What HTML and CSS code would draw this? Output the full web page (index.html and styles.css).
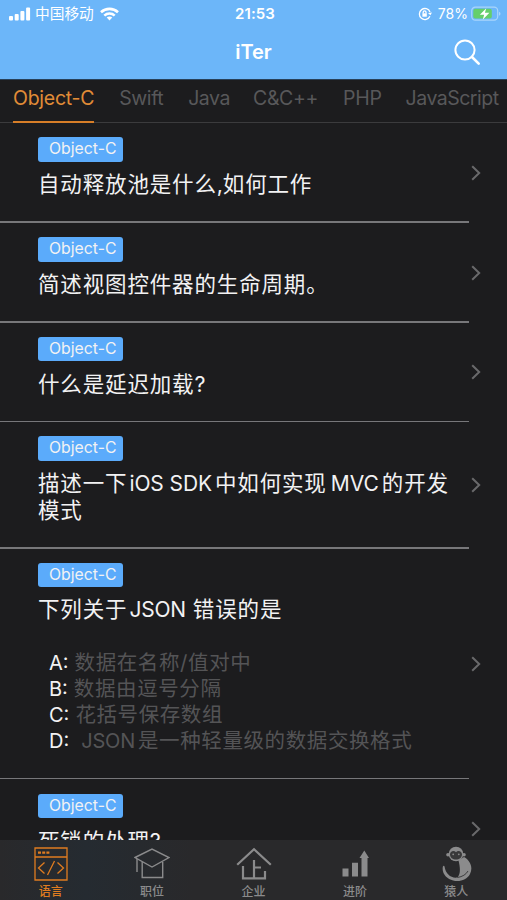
FILE: index.html
```html
<!DOCTYPE html>
<html lang="zh-CN">
<head>
<meta charset="utf-8">
<title>iTer</title>
<link rel="stylesheet" href="styles.css">
</head>
<body>
<svg width="0" height="0" class="defs"><symbol id="chevron" viewBox="0 0 10 16"><path d="M1.2 1.2 8.2 8l-7 6.8" fill="none" stroke="currentColor" stroke-width="2"/></symbol></svg>
<div class="app">
  <header class="header">
    <div class="status">
      <div class="status-left">
        <svg width="22" height="14" viewBox="0 0 22 14" fill="#fff"><rect x="0" y="9" width="4" height="4.5" rx="1"/><rect x="5.7" y="7" width="4" height="6.5" rx="1"/><rect x="11.4" y="4" width="4" height="9.5" rx="1"/><rect x="17.1" y="0.5" width="4" height="13" rx="1"/></svg>
        <span class="carrier">中国移动</span>
        <svg width="19" height="14" viewBox="0 0 19 14" fill="none" stroke="#fff" stroke-width="2.6"><path d="M1 5.2C5.8.7 13.2.7 18 5.2"/><path d="M4.3 8.6c3-2.8 7.4-2.8 10.4 0"/><path d="m9.5 13.5 2.8-3c-1.6-1.3-4-1.3-5.6 0Z" fill="#fff" stroke="none"/></svg>
      </div>
      <time class="clock">21:53</time>
      <div class="status-right">
        <svg class="lock" width="14" height="14" viewBox="0 0 14 14" fill="none" stroke="#fff" stroke-width="1.3"><path d="M11.9 9.3A5.5 5.5 0 1 1 12 5"/><path d="m10 6 2.4 2.2L14 5.5Z" fill="#fff" stroke="none"/><rect x="4.4" y="6.3" width="4.4" height="3.4" fill="#fff" stroke="none"/><path d="M5.2 6.5V5.3a1.4 1.4 0 0 1 2.8 0v1.2"/></svg>
        <span class="percent">78%</span>
        <svg width="30" height="16" viewBox="0 0 30 16"><rect x=".7" y="1.2" width="26" height="13" rx="3.6" fill="none" stroke="#a9d5fb" stroke-width="1.2"/><rect x="2.3" y="2.8" width="18.5" height="9.8" rx="2" fill="#65cf6b"/><path d="M28 5.7c2 .7 2 3.3 0 4Z" fill="#a9d5fb"/><path d="m15.3 2.2-6.5 6.6h4.4l-1.5 5 6.7-7h-4.5Z" fill="#fff"/></svg>
      </div>
    </div>
    <div class="nav">
      <h1>iTer</h1>
      <svg class="search" width="27" height="27" viewBox="0 0 27 27" fill="none" stroke="#fff"><circle cx="11" cy="11" r="9.6" stroke-width="2"/><path d="m18 18 6.7 6.7" stroke-width="2.6" stroke-linecap="round"/></svg>
    </div>
  </header>
  <nav class="tabs">
    <a class="tab active">Object-C</a><a class="tab">Swift</a><a class="tab">Java</a><a class="tab cpp">C&amp;C++</a><a class="tab php">PHP</a><a class="tab js">JavaScript</a>
  </nav>
  <main class="list">
    <article class="row"><div class="content"><span class="tag">Object-C</span><h2>自动释放池是什么<i class="comma">,</i>如何工作</h2></div><svg class="chev"><use href="#chevron"/></svg></article>
    <article class="row"><div class="content"><span class="tag">Object-C</span><h2>简述视图控件器的生命周期。</h2></div><svg class="chev"><use href="#chevron"/></svg></article>
    <article class="row"><div class="content"><span class="tag">Object-C</span><h2>什么是延迟加载<i>?</i></h2></div><svg class="chev"><use href="#chevron"/></svg></article>
    <article class="row"><div class="content"><span class="tag">Object-C</span><h2>描述一下<b>iOS SDK</b>中如何实现<b class="mvc">MVC</b>的开发<br>模式</h2></div><svg class="chev"><use href="#chevron"/></svg></article>
    <article class="row"><div class="content"><span class="tag">Object-C</span><h2>下列关于<b class="json-title">JSON</b> 错误的是</h2>
      <ul class="options">
        <li><b>A:</b><span>数据在名称/值对中</span></li>
        <li><b>B:</b><span>数据由逗号分隔</span></li>
        <li><b>C:</b><span>花括号保存数组</span></li>
        <li class="wide"><b>D:</b><span><i class="json">JSON</i>是一种轻量级的数据交换格式</span></li>
      </ul></div><svg class="chev"><use href="#chevron"/></svg></article>
    <article class="row"><div class="content"><span class="tag">Object-C</span><h2>死锁的处理<i>?</i></h2></div><svg class="chev"><use href="#chevron"/></svg></article>
  </main>
  <footer class="tabbar">
    <a class="item on"><svg width="36" height="36" viewBox="0 0 36 36" fill="none" stroke="currentColor" stroke-width="1.3"><path d="M2 2h32v32H2ZM2 11h32"/><path d="M5 6.7h11.5" stroke-width="2.2" stroke-dasharray="3 1.2"/><path d="m11.5 16.5-6 5.5 6 5.5M24.5 16.5l6 5.5-6 5.5M21.500 15l-7 14"/></svg><span>语言</span></a>
    <a class="item"><svg width="36" height="36" viewBox="0 0 36 36" fill="none" stroke="currentColor" stroke-width="1.4"><path d="M1 11.5 18 3l17 8.5L18 21Z"/><path d="M8.2 16v15.5h20.5V16M3 13v13"/></svg><span>职位</span></a>
    <a class="item"><svg width="36" height="36" viewBox="0 0 36 36" fill="none" stroke="currentColor" stroke-width="2.2"><path d="M1.2 18.7 18 3.2l16.8 15.5M7 20v12.3h22V25M18 14v18M18 21.5h7"/></svg><span>企业</span></a>
    <a class="item"><svg width="36" height="36" viewBox="0 0 36 36" fill="currentColor"><path d="M5.5 22.500h6v8h-6ZM15 16.700h6v13.800h-6ZM24.500 12h-2L27.300 4.500l4.700 7.500h-1.500v18.500h-6Z"/></svg><span>进阶</span></a>
    <a class="item"><svg width="36" height="36" viewBox="0 0 36 36"><path d="M26 11c7 4 9 11 6 17-5 10-22 9-26.500-1-1-2.500-1-5-.6-6.500.4-1.200 1.500-1 1.700.3C7.600 28 13 32.500 19.500 31.500c3.500-4 2.500-11 1-17Z" fill="currentColor"/><path d="M19.500 31.500c5-.8 8.500-3 10.500-6.500" fill="none" stroke="#29292b" stroke-width=".8"/><circle cx="18" cy="8" r="7.300" fill="currentColor"/><circle cx="10" cy="8.800" r="1.800" fill="currentColor"/><circle cx="26" cy="8.800" r="1.800" fill="currentColor"/><path d="M12 8.500c0-3.500 4-4.500 6-2.300 2-2.200 6-1.200 6 2.300 0 3-2.800 5-6 5s-6-2-6-5Z" fill="#39393a"/><circle cx="15.200" cy="8.300" r=".9" fill="currentColor"/><circle cx="20.800" cy="8.300" r=".9" fill="currentColor"/></svg><span>猿人</span></a>
  </footer>
</div>
</body>
</html>
```
FILE: styles.css
```css
* { box-sizing: border-box; }
body { margin: 0; background: #1c1c1e; font-family: Inter, "Noto Sans CJK SC", sans-serif; color: #f2f2f3; }
h1, h2, ul { margin: 0; padding: 0; font-weight: 400; }
i, b { font-style: normal; font-weight: 400; }
.defs { position: absolute; }
.app { height: 900px; overflow: hidden; display: flex; flex-direction: column; }
.header { flex: none; height: 79px; background: #6cb6f9; color: #fff; }
.status { height: 27px; padding: 0 6px 0 9px; display: grid; grid-template-columns: 1fr auto 1fr; align-items: center; }
.status-left, .status-right { display: flex; align-items: center; }
.status-right { justify-content: flex-end; }
.carrier { font-size: 14.7px; line-height: 20px; margin: 0 6px 0 4px; }
.clock { font-size: 15px; font-weight: 600; line-height: 20px; letter-spacing: .1px; }
.percent { font-size: 14px; line-height: 20px; margin: 0 3px 0 6px; }
.nav { height: 52px; padding: 0 26px; display: grid; grid-template-columns: 1fr auto 1fr; align-items: center; }
.nav h1 { grid-column: 2; font-size: 20px; font-weight: 600; line-height: 25px; margin-top: -1px; }
.search { justify-self: end; margin-top: -1px; }
.tabs { flex: none; height: 44px; padding-left: 13px; display: flex; gap: 25px; border-bottom: 1px solid #3b3b3d; border-top: 1px solid #274059; }
.tab { height: 43px; font-size: 19.5px; line-height: 37px; letter-spacing: -.45px; color: #58585a; white-space: nowrap; }
.tab.active { color: #e18c37; border-bottom: 2px solid #d77e28; letter-spacing: -.25px; }
.tab.cpp { letter-spacing: -.35px; margin-left: -2px; }
.tab.php { letter-spacing: -.3px; }
.tab.js { letter-spacing: -.5px; margin-left: -1px; }
.list { flex: 1; min-height: 0; overflow: hidden; }
.row { display: flex; align-items: center; position: relative; padding: 14px 26px 25px 38px; min-height: 99.8px; }
.row::after { content: ""; position: absolute; left: 0; bottom: 0; width: 469px; height: 1.5px; background: #77777a; }
.content { flex: 1; min-width: 0; }
.tag { display: block; width: 85px; height: 24.5px; border-radius: 3px; background: #5babfb; font-size: 15.8px; line-height: 24px; padding-left: 11px; margin-bottom: 9.3px; }
.row h2 { font-size: 21.5px; line-height: 26.2px; letter-spacing: .85px; white-space: nowrap; }
.row h2 b { font-size: 21px; letter-spacing: -.1px; margin: 0 3px 0 2px; }
.row h2 .mvc { letter-spacing: 0; margin: 0 3px 0 4px; }
.row h2 .json-title { margin: 0 0 0 2px; letter-spacing: -.2px; }
.comma { letter-spacing: -.2px; }
.chev { flex: none; width: 10px; height: 16px; color: #69696b; position: relative; top: 5.5px; }
.options { list-style: none; margin-top: 26px; padding-left: 11px; }
.options li { display: flex; gap: 6px; line-height: 26.2px; white-space: nowrap; }
.options b { font-size: 20px; }
.options span { font-size: 20.5px; letter-spacing: .6px; color: #545456; }
.options .wide { gap: 12px; }
.json { font-size: 20px; letter-spacing: -.2px; margin-right: 3px; }
.tabbar { flex: none; height: 60px; background: linear-gradient(90deg, #29292b 0%, #252b31 17%, #29292b 38%); display: flex; color: #8b8b8c; }
.item { flex: 1; display: flex; flex-direction: column; align-items: center; padding-top: 6px; }
.item span { font-size: 12px; line-height: 16px; font-weight: 500; margin-top: 2px; }
.item.on { color: #df7c20; }
```
